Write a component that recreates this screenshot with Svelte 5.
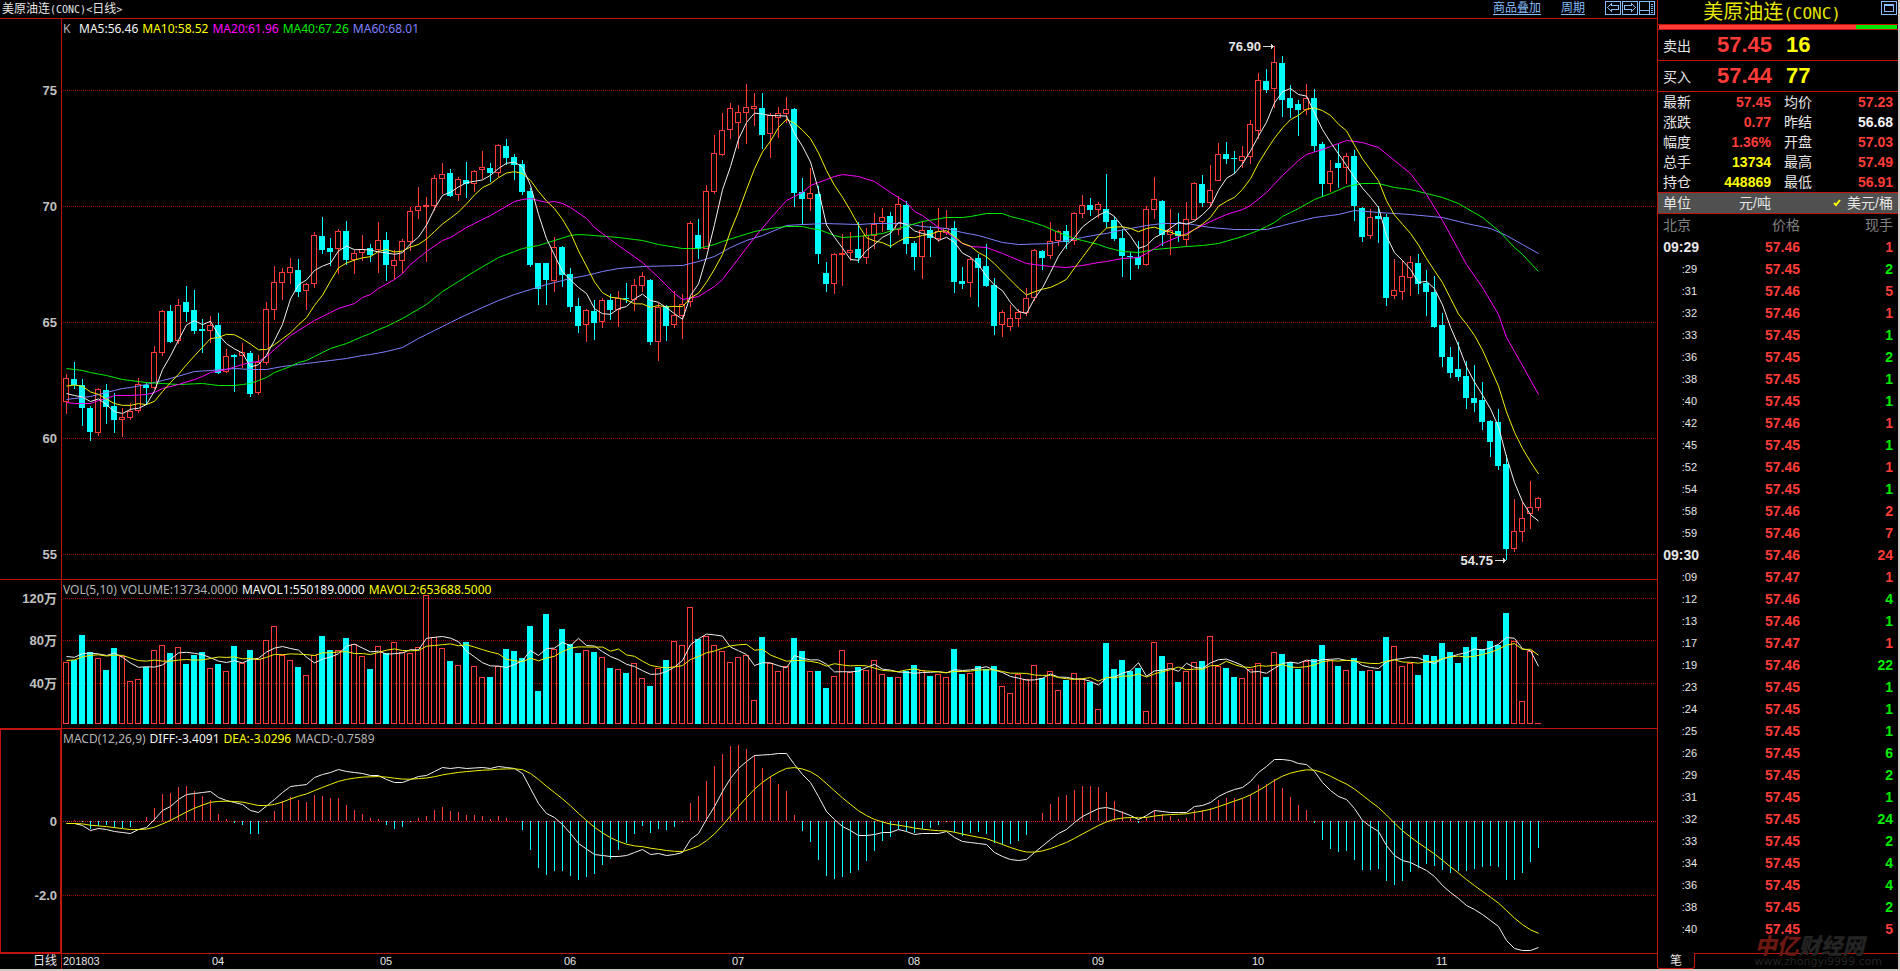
<script lang="ts">
    const STEP = 8
    const BODY = 6

    // direction, high, body top, body bottom, low
    const candleRows = `
u 374 378 402 414|d 362 379 385 389|d 379 385 408 426|d 406 408 432 441|u 388 389 433 436|d 384 390 407 424|d 393 406 420 433|u 408 417 420 437|u 403 411 418 420|u 378 384 411 413
d 383 385 388 405|u 346 352 388 389|u 310 311 353 356|d 305 311 342 343|u 299 305 341 344|d 286 302 312 322|d 290 310 331 334|d 319 329 331 353|u 316 325 331 343|d 313 325 373 374
u 349 356 372 373|d 354 355 357 392|u 343 352 356 368|d 351 353 394 397|u 355 362 393 395|u 302 309 363 365|u 266 282 310 320|u 268 272 283 300|u 258 267 273 284|d 259 270 292 297
u 283 284 291 310|u 232 235 284 288|d 217 236 250 254|d 238 248 252 266|u 229 231 249 274|d 221 231 260 265|u 250 253 260 274|u 235 249 253 261|d 244 248 255 262|u 222 240 250 273
d 232 240 265 281|u 250 260 266 279|u 239 241 261 273|u 207 211 242 251|u 187 206 211 219|u 197 205 207 262|u 175 178 206 211|u 163 174 179 194|d 169 173 196 197|u 177 179 195 201
d 162 180 184 198|u 170 171 184 192|u 151 167 170 179|d 163 168 173 182|u 144 145 173 177|d 139 146 158 165|d 154 157 165 180|d 160 164 192 195|d 188 191 265 267|d 263 263 289 305
d 263 263 280 305|u 237 247 281 292|d 246 247 275 287|d 268 274 307 312|d 298 306 326 333|u 309 310 325 342|d 300 311 323 340|u 298 300 322 328|d 294 300 310 320|u 291 298 310 327
d 283 298 299 303|u 279 285 300 311|u 272 276 286 292|d 279 280 342 345|u 303 307 342 361|d 305 306 326 341|u 291 315 325 328|u 294 304 316 339|u 221 223 302 307|d 219 235 249 259
u 185 191 249 249|u 135 153 192 194|u 113 130 155 156|u 103 108 130 139|u 105 112 123 149|u 84 107 113 144|u 93 106 109 126|d 93 108 135 149|u 113 115 134 158|u 107 113 118 138
u 97 109 114 123|d 108 109 193 207|d 178 192 199 225|u 168 193 199 211|d 186 194 254 264|d 262 273 284 292|u 253 254 284 294|u 234 253 255 286|u 232 250 253 261|d 222 249 258 263
u 228 235 258 264|u 213 224 236 249|u 208 217 222 232|d 212 216 230 248|u 196 204 230 235|d 201 205 244 254|d 241 243 257 270|u 221 230 257 279|d 226 230 238 257|u 208 231 239 242
u 210 228 233 235|d 221 228 282 293|d 267 281 284 289|u 257 259 283 297|d 254 258 268 307|d 244 266 286 287|d 278 285 326 335|u 310 312 325 337|u 305 318 327 331|u 309 312 319 327
u 288 298 313 316|u 249 250 298 301|d 250 251 258 270|u 222 241 256 259|u 230 231 241 246|d 225 231 242 249|u 212 213 241 245|u 195 205 214 218|d 198 205 210 216|u 202 204 210 218
d 174 209 222 228|d 217 220 239 241|d 229 238 256 277|d 252 256 257 280|d 241 257 265 269|u 206 209 265 266|u 177 199 210 219|d 200 201 235 246|u 209 230 235 255|d 213 231 236 242
u 202 219 240 246|u 182 183 220 220|d 175 184 203 207|u 165 190 203 207|u 143 154 181 181|d 142 154 159 164|d 151 158 159 174|u 146 156 161 168|u 120 124 157 164|u 73 80 131 139
d 69 81 90 93|u 46 62 89 108|d 56 63 100 117|d 85 98 108 118|d 100 104 110 136|u 84 98 110 115|d 89 98 146 152|d 142 144 184 197|u 160 171 184 192|d 144 163 168 188
u 153 156 168 184|d 150 156 206 221|d 207 208 237 242|u 209 217 236 239|d 206 216 219 243|d 214 217 298 306|u 259 290 296 299|u 260 276 292 300|u 256 262 278 296|d 254 263 284 294
d 270 283 292 316|d 276 292 327 328|d 313 325 357 367|d 347 357 373 378|d 342 369 377 381|d 361 376 398 409|d 365 398 403 412|d 382 400 422 430|d 420 421 442 457|d 409 422 466 470
d 455 464 549 560|u 499 531 549 552|u 502 518 532 542|u 481 507 514 529|u 497 498 508 511`

    const candles = candleRows.trim().split(/[|\n]/).map((row, i) => {
        const [dir, high, top, bottom, low] = row.split(' ')
        return { i, up: dir === 'u', high: +high, top: +top, bottom: +bottom, low: +low }
    })

    const volumes = [
        62,64,89,72,66,54,76,68,43,45,57,74,79,71,77,60,69,72,56,60,53,78,61,74,65,84,98,69,64,57,
        49,69,88,74,74,86,80,68,55,78,71,82,72,71,77,129,87,76,63,59,82,58,47,47,58,75,73,66,98,33,
        110,75,95,80,71,74,72,67,56,55,51,61,46,38,56,64,83,79,117,85,88,79,73,62,67,69,24,87,61,53,
        58,86,73,53,53,36,48,74,52,57,54,64,50,47,47,53,59,54,48,50,47,75,50,51,58,55,58,38,31,50,
        45,59,46,53,34,44,51,45,42,15,81,55,64,53,56,13,82,68,61,42,53,62,63,88,58,56,47,46,55,61,
        47,72,70,62,55,63,65,79,64,58,54,66,53,54,53,87,78,58,61,49,69,68,81,72,61,77,87,75,83,79,
        111,83,23,73,1
    ]

    const macd = [
        0,1,-1,-8,-5,-4,-7,-7,-6,0,4,13,27,28,34,35,30,25,21,7,2,-2,-4,-13,-13,-1,10,20,24,21,
        19,26,25,23,23,16,11,7,3,2,-4,-8,-6,-1,3,5,11,14,10,9,6,6,5,2,5,3,0,-9,-29,-47,
        -54,-50,-50,-55,-59,-56,-53,-44,-38,-29,-22,-13,-5,-12,-8,-9,-6,-1,18,25,40,55,67,75,76,72,66,53,45,37,
        30,6,-10,-21,-39,-55,-58,-56,-52,-49,-40,-30,-20,-16,-8,-10,-12,-8,-7,-4,-1,-11,-15,-12,-11,-13,-22,-23,-23,-20,
        -14,0,8,17,24,26,31,35,35,34,29,20,10,3,-2,4,10,7,5,2,3,11,11,13,21,23,23,22,26,36,
        37,42,33,24,16,11,-2,-19,-28,-31,-30,-39,-49,-49,-48,-60,-64,-60,-51,-47,-43,-45,-49,-52,-50,-50,-48,-46,-45,-46,
        -59,-59,-52,-41,-27
    ]

    // "index:value" pairs
    const ma20 = '0:402 1:403 3:403 4:400 5:398 6:395 8:395 10:394 11:392 12:388 14:384 16:379 17:376 18:372 20:369 22:364 23:362 24:361 25:356 28:335 31:320 34:308 36:303 37:297 38:294 39:288 41:279 42:273 43:264 45:251 47:240 48:237 50:227 53:215 56:201 57:199 58:198 60:202 61:201 62:203 63:207 65:218 66:227 69:245 72:262 74:277 76:293 77:299 79:296 81:286 82:279 86:237 88:218 90:200 91:196 92:192 93:185 94:182 96:176 97:174 99:176 101:181 103:192 105:202 106:211 107:215 109:227 110:232 112:243 113:246 115:247 117:253 120:263 123:266 125:267 127:265 129:262 130:261 132:258 134:257 135:253 137:243 140:233 143:221 145:214 147:209 148:205 150:192 152:175 154:160 155:154 157:149 160:140 162:142 164:147 166:160 168:173 170:194 172:220 175:264 177:287 179:314 180:337 182:365 184:394'
    const ma40 = '0:368 2:370 3:372 5:375 7:379 10:382 14:384 17:383 19:385 21:385 23:383 25:377 26:372 28:366 29:362 30:360 33:348 35:343 37:336 38:333 39:329 40:326 42:318 45:304 47:291 51:271 54:257 57:248 59:245 61:240 63:235 64:234 66:235 69:237 72:240 74:244 77:248 79:248 81:244 82:241 84:236 86:231 88:228 90:226 92:226 93:228 94:229 96:235 97:237 99:236 102:233 104:228 107:221 110:217 112:217 113:216 115:213 117:213 118:216 120:220 122:225 124:232 126:238 129:244 130:247 132:251 134:252 136:249 140:246 142:245 144:243 147:236 149:230 151:222 152:216 154:208 156:199 158:193 160:186 162:183 164:183 166:187 168:189 172:197 174:203 177:217 179:230 181:247 182:254 184:271'
    const ma60 = '0:399 2:397 3:396 5:392 7:388 8:387 10:384 13:378 16:371 18:370 21:368 23:369 25:369 27:366 30:363 32:361 35:358 37:355 38:354 40:351 42:347 44:338 46:330 49:318 52:307 54:300 56:294 58:289 60:284 63:278 65:275 67:271 69:268 72:266 77:265 79:261 81:256 83:247 85:240 87:235 90:225 92:224 95:223 99:224 101:223 103:223 105:223 107:226 110:228 112:232 114:235 117:242 119:244 123:243 125:240 127:237 129:234 130:233 131:231 133:228 135:225 137:223 140:223 143:227 146:229 150:229 153:223 156:217 159:214 161:210 164:212 168:214 172:217 175:223 178:228 180:235 182:244 184:253'
    const diffKeys = '0:-2 1:-2 2:-4 3:-9 4:-7 5:-8 6:-10 7:-11 8:-12 9:-8 10:-6 11:2 12:11 13:15 14:22 15:27 17:29 18:30 19:24 20:21 22:17 23:11 24:9 26:22 27:29 28:35 30:37 31:44 32:47 33:49 34:52 35:50 37:48 38:46 39:46 40:42 41:39 42:39 44:45 45:46 47:54 48:53 49:54 50:53 52:54 53:53 54:55 56:53 57:48 58:33 59:18 60:8 61:4 62:-3 63:-12 64:-22 66:-33 68:-35 69:-35 70:-34 72:-28 73:-33 74:-32 75:-34 76:-33 77:-31 78:-18 79:-12 80:2 81:15 82:30 83:43 84:53 85:60 86:66 88:67 89:68 90:68 91:57 92:47 93:39 94:25 95:10 96:2 97:-5 98:-9 99:-14 100:-14 101:-13 102:-11 103:-11 104:-8 105:-10 106:-13 107:-12 109:-12 110:-10 111:-16 112:-20 114:-22 115:-23 116:-31 117:-35 118:-38 119:-39 120:-38 121:-31 123:-18 124:-12 125:-8 126:-1 127:5 128:9 129:13 130:14 131:12 133:6 134:2 135:6 136:11 138:9 140:9 141:15 142:16 143:19 144:25 145:29 146:32 147:34 148:40 149:49 150:55 151:62 152:62 153:61 154:58 155:57 156:50 157:39 158:31 159:25 160:22 161:13 162:1 163:-5 164:-10 165:-24 166:-34 167:-39 168:-41 169:-45 170:-49 171:-55 172:-64 173:-71 174:-77 175:-84 176:-88 177:-93 178:-99 179:-105 180:-119 181:-127 182:-129 183:-129 184:-126'

    function expand(keys: string) {
        const pairs = keys.split(' ').map((k) => k.split(':').map(Number))
        const out: number[] = []
        for (let k = 0; k < pairs.length - 1; k++) {
            const [a, va] = pairs[k]
            const [b, vb] = pairs[k + 1]
            for (let i = a; i < b; i++) out.push(va + ((vb - va) * (i - a)) / (b - a))
        }
        out.push(pairs[pairs.length - 1][1])
        return out
    }

    // history holds the nine values before the first visible bar
    function average(values: number[], history: number[], n: number) {
        const all = [...history, ...values]
        return values.map((_, i) => {
            const end = i + history.length + 1
            return all.slice(end - n, end).reduce((a, b) => a + b, 0) / n
        })
    }

    function ema(values: number[], k: number) {
        let last = values[0]
        return values.map((v) => (last = last + k * (v - last)))
    }

    const line = (values: number[], toY: (v: number) => number) =>
        values.map((v, i) => `${i * STEP + 4.5},${(toY(v) + 0.5).toFixed(1)}`).join(' ')

    const priceY = (v: number) => v - 19
    const volY = (v: number) => 144 - v
    const macdY = (v: number) => 92 - v

    const closes = candles.map((c) => (c.up ? c.top : c.bottom))
    const closeHistory = [396, 395, 375, 365, 360, 375, 400, 410, 402]
    const volHistory = [58, 58, 58, 60, 66, 68, 70, 70, 70]
    const diff = expand(diffKeys)

    const priceLines = [
        { cls: 'c-blue', points: line(expand(ma60), priceY) },
        { cls: 'c-green', points: line(expand(ma40), priceY) },
        { cls: 'c-magenta', points: line(expand(ma20), priceY) },
        { cls: 'c-yellow', points: line(average(closes, closeHistory, 10), priceY) },
        { cls: 'c-white', points: line(average(closes, closeHistory, 5), priceY) }
    ]
    const volLines = [
        { cls: 'c-white', points: line(average(volumes, volHistory, 5), volY) },
        { cls: 'c-yellow', points: line(average(volumes, volHistory, 10), volY) }
    ]
    const macdLines = [
        { cls: 'c-white', points: line(diff, macdY) },
        { cls: 'c-yellow', points: line(ema(diff, 0.2), macdY) }
    ]

    const priceGrid = [['75', 71], ['70', 187], ['65', 303], ['60', 419], ['55', 535]] as [string, number][]
    const volGrid = [['120万', 18], ['80万', 60], ['40万', 103]] as [string, number][]
    const macdGrid = [['0', 92], ['-2.0', 166]] as [string, number][]
    const months = [['04', 18], ['05', 39], ['06', 62], ['07', 83], ['08', 105], ['09', 128], ['10', 148], ['11', 171]] as [string, number][]

    const quotes = [
        ['最新', '57.45', 'red', '均价', '57.23', 'red'],
        ['涨跌', '0.77', 'red', '昨结', '56.68', 'white'],
        ['幅度', '1.36%', 'red', '开盘', '57.03', 'red'],
        ['总手', '13734', 'yellow', '最高', '57.49', 'red'],
        ['持仓', '448869', 'yellow', '最低', '56.91', 'red']
    ]

    const trades = `09:29 57.46 1 r|:29 57.45 2 g|:31 57.46 5 r|:32 57.46 1 r|:33 57.45 1 g|:36 57.45 2 g|:38 57.45 1 g|:40 57.45 1 g|:42 57.46 1 r|:45 57.45 1 g|:52 57.46 1 r|:54 57.45 1 g|:58 57.46 2 r|:59 57.46 7 r|09:30 57.46 24 r|:09 57.47 1 r|:12 57.46 4 g|:13 57.46 1 g|:17 57.47 1 r|:19 57.46 22 g|:23 57.45 1 g|:24 57.45 1 g|:25 57.45 1 g|:26 57.45 6 g|:29 57.45 2 g|:31 57.45 1 g|:32 57.45 24 g|:33 57.45 2 g|:34 57.45 4 g|:36 57.45 4 g|:38 57.45 2 g|:40 57.45 5 r`
        .split('|')
        .map((t) => t.split(' '))
</script>

{#snippet axis(labels: [string, number][])}
    <svg class="axis">
        {#each labels as [text, y]}
            <text x="57" y={y + 5} text-anchor="end">{text}</text>
        {/each}
    </svg>
{/snippet}

{#snippet grid(labels: [string, number][])}
    {#each labels as [text, y]}
        <line class="grid" class:zero={text === '0'} x1="1" x2="100%" y1={y + 0.5} y2={y + 0.5} />
    {/each}
{/snippet}

{#snippet lines(items: { cls: string; points: string }[])}
    {#each items as l}
        <polyline class={l.cls} points={l.points} />
    {/each}
{/snippet}

<div class="app">
    <main>
        <header>
            <h1>美原油连<span class="latin">(CONC)&lt;</span>日线<span class="latin">&gt;</span></h1>
            <nav>
                <a href="#overlay">商品叠加</a>
                <a href="#period">周期</a>
                <div class="tools">
                    <button aria-label="上一个">
                        <svg width="16" height="14"><rect x=".5" y=".5" width="15" height="13" /><path d="M2.5 6.5 6.5 2.5V4.5H13.5V8.5H6.5V10.5Z" /></svg>
                    </button>
                    <button aria-label="下一个">
                        <svg width="16" height="14"><rect x=".5" y=".5" width="15" height="13" /><path d="M13.5 6.5 9.5 2.5V4.5H2.5V8.5H9.5V10.5Z" /></svg>
                    </button>
                    <button aria-label="布局">
                        <svg width="16" height="14"><rect x=".5" y=".5" width="15" height="13" /><path d="M.5 9.5H10.5M10.5 .5V13.5M12 3.5H14M12 5.5H14M12 7.5H14M12 9.5H14M12 11.5H14" /></svg>
                    </button>
                </div>
            </nav>
        </header>

        <section class="pane price">
            {@render axis(priceGrid)}
            <div class="plot">
                <svg>
                    {@render grid(priceGrid)}
                    <g class="bars">
                        {#each candles as c}
                            {@const x = c.i * STEP + 1}
                            {#if c.up}
                                <rect class="up" x={x + 3} y={priceY(c.high)} width="1" height={c.top - c.high} />
                                <rect class="up" x={x + 3} y={priceY(c.bottom)} width="1" height={c.low - c.bottom} />
                                <rect class="hollow" x={x + 0.5} y={priceY(c.top) + 0.5} width={BODY - 1} height={Math.max(1, c.bottom - c.top - 1)} />
                            {:else}
                                <rect class="down" x={x + 3} y={priceY(c.high)} width="1" height={c.low - c.high} />
                                <rect class="down" {x} y={priceY(c.top)} width={BODY} height={c.bottom - c.top} />
                            {/if}
                        {/each}
                    </g>
                    {@render lines(priceLines)}
                    <text x="1199" y="32" text-anchor="end">76.90</text>
                    <path class="arrow" d="M1201 27.5H1212M1209 25V30M1210 26V29" />
                    <text x="1431" y="546" text-anchor="end">54.75</text>
                    <path class="arrow" d="M1433 541.5H1444M1441 539V544M1442 540V543" />
                </svg>
                <p class="legend">
                    <span class="k">K</span>
                    <span class="t-white">MA5:56.46</span>
                    <span class="t-yellow">MA10:58.52</span>
                    <span class="t-magenta">MA20:61.96</span>
                    <span class="t-green">MA40:67.26</span>
                    <span class="t-blue">MA60:68.01</span>
                </p>
            </div>
        </section>

        <section class="pane volume">
            {@render axis(volGrid)}
            <div class="plot">
                <svg>
                    {@render grid(volGrid)}
                    <g class="bars">
                        {#each candles as c}
                            {@const h = volumes[c.i]}
                            {#if c.up && h > 1}
                                <rect class="hollow" x={c.i * STEP + 1.5} y={volY(h) + 0.5} width={BODY - 1} height={h - 1} />
                            {:else}
                                <rect class={c.up ? 'up' : 'down'} x={c.i * STEP + 1} y={volY(h)} width={BODY} height={h} />
                            {/if}
                        {/each}
                    </g>
                    {@render lines(volLines)}
                </svg>
                <p class="legend">
                    <span>VOL(5,10)</span>
                    <span>VOLUME:13734.0000</span>
                    <span class="t-white">MAVOL1:550189.0000</span>
                    <span class="t-yellow">MAVOL2:653688.5000</span>
                </p>
            </div>
        </section>

        <section class="pane macd">
            {@render axis(macdGrid)}
            <div class="plot">
                <svg>
                    {@render grid(macdGrid)}
                    <g class="bars">
                        {#each macd as v, i}
                            <rect class={v > 0 ? 'up' : 'down'} x={i * STEP + 4} y={v > 0 ? 92 - v : 92} width="1" height={Math.abs(v)} />
                        {/each}
                    </g>
                    {@render lines(macdLines)}
                </svg>
                <p class="legend">
                    <span>MACD(12,26,9)</span>
                    <span class="t-white">DIFF:-3.4091</span>
                    <span class="t-yellow">DEA:-3.0296</span>
                    <span>MACD:-0.7589</span>
                </p>
            </div>
        </section>

        <footer>
            <span class="period">日线</span>
            <svg>
                <text x="1" y="11">201803</text>
                {#each months as [m, i]}
                    <text x={i * STEP + 6} y="11">{m}</text>
                {/each}
            </svg>
        </footer>
    </main>

    <aside>
        <div class="name">
            <h2>美原油连<span class="latin">(CONC)</span></h2>
            <button aria-label="窗口">
                <svg width="16" height="14"><rect x=".5" y=".5" width="15" height="13" /><rect x="3.5" y="3.5" width="9" height="7" /><path d="M3 4.5H13" /></svg>
            </button>
        </div>
        <div class="ratio"><i class="buy"></i><i class="sell"></i></div>
        <div class="deal"><span>卖出</span><b class="t-red">57.45</b><b class="t-yellow">16</b></div>
        <div class="deal"><span>买入</span><b class="t-red">57.44</b><b class="t-yellow">77</b></div>

        <table class="quotes">
            <tbody>
                {#each quotes as [a, av, ac, b, bv, bc]}
                    <tr>
                        <th scope="row">{a}</th>
                        <td class="t-{ac}">{av}</td>
                        <th scope="row" class="second">{b}</th>
                        <td class="t-{bc}">{bv}</td>
                    </tr>
                {/each}
            </tbody>
        </table>

        <div class="unit">
            <span>单位</span>
            <button>元/吨</button>
            <button>
                <svg width="8" height="8"><path d="M1 4 3 6 7 1" /></svg>
                美元/桶
            </button>
        </div>

        <table class="trades">
            <thead>
                <tr><th class="first">北京</th><th>价格</th><th>现手</th></tr>
            </thead>
            <tbody>
                {#each trades as [time, price, qty, side]}
                    <tr>
                        <td class="time" class:minute={time.length > 3}>{time}</td>
                        <td class="t-red">{price}</td>
                        <td class={side === 'g' ? 't-green' : 't-red'}>{qty}</td>
                    </tr>
                {/each}
            </tbody>
        </table>

        <div class="tabs">
            <button class="tab">笔</button>
            <div class="rest"></div>
        </div>

        <div class="mark">
            <strong><em>中亿</em>财经网</strong>
            <small>www.zhongyi9999.com</small>
        </div>
    </aside>
</div>

<style>
    :global(body) {
        margin: 0;
        background: #000;
    }

    .app {
        --line: #c0140c;
        --link: #84bcf8;
        display: flex;
        min-height: 100vh;
        box-sizing: border-box;
        border-right: 2px solid #d4c8c4;
        border-bottom: 2px solid #d4c8c4;
        background: #000;
        color: #e6e6e6;
        font: 14px "Liberation Sans", "Noto Sans CJK SC", sans-serif;
    }

    h1, h2, p {
        margin: 0;
        font-weight: normal;
    }

    button {
        padding: 0;
        border: none;
        background: none;
        color: inherit;
        font: inherit;
        cursor: pointer;
    }

    svg {
        display: block;
    }

    main {
        flex: 1;
        min-width: 0;
        display: flex;
        flex-direction: column;
    }

    header {
        display: flex;
        justify-content: space-between;
        height: 18px;
        line-height: 18px;
        font-size: 12px;
        border-bottom: 1px solid var(--line);
    }

    h1 {
        padding-left: 2px;
        font-size: 12px;
    }

    .latin {
        font-family: "DejaVu Sans Mono", monospace;
        font-size: 10px;
    }

    nav {
        display: flex;
        gap: 20px;
        padding-right: 2px;
        line-height: 16px;
    }

    nav a {
        color: var(--link);
        text-underline-offset: 2px;
    }

    .tools {
        display: flex;
        align-items: flex-start;
        gap: 1px;
        padding-top: 1px;
    }

    button svg {
        fill: none;
        stroke: var(--link);
        shape-rendering: crispEdges;
    }

    .pane {
        display: grid;
        grid-template-columns: 61px 1fr;
        border-bottom: 1px solid var(--line);
    }

    .price { height: 560px; }
    .volume { height: 148px; }
    .macd { height: 224px; }

    .axis, .plot > svg {
        width: 100%;
        height: 100%;
    }

    .macd .axis {
        box-shadow: inset 0 0 0 1px var(--line);
    }

    .axis text {
        fill: #c0c0c0;
        font-size: 13px;
        font-weight: bold;
    }

    .plot {
        display: grid;
        min-width: 0;
        border-left: 1px solid var(--line);
    }

    .plot > * {
        grid-area: 1 / 1;
        min-width: 0;
    }

    .plot text {
        fill: #e6e6e6;
        font-size: 13px;
        font-weight: bold;
    }

    .legend {
        display: flex;
        align-self: start;
        gap: 4px;
        padding-left: 1px;
        line-height: 19px;
        font-family: "Noto Sans", sans-serif;
        font-size: 12px;
        color: #b4b4b4;
    }

    .k { width: 12px; }

    .grid {
        stroke: #960000;
        stroke-dasharray: 1 1;
        shape-rendering: crispEdges;
    }

    .grid.zero { stroke: #e01c1c; }

    .bars { shape-rendering: crispEdges; }
    .up { fill: #ff3c38; }
    .down { fill: #00ffff; }
    .hollow {
        fill: none;
        stroke: #ff3c38;
    }

    polyline { fill: none; }
    .c-white { stroke: #f0f0f0; }
    .c-yellow { stroke: #f0f000; }
    .c-magenta { stroke: #ff00ff; }
    .c-green { stroke: #00f000; }
    .c-blue { stroke: #8080ff; }

    .t-white { color: #f4f4f4; }
    .t-yellow { color: #ffff00; }
    .t-magenta { color: #ff00ff; }
    .t-green { color: #00ec00; }
    .t-blue { color: #8080ff; }
    .t-red { color: #ff3c38; }

    .arrow {
        stroke: #d8d8d8;
        shape-rendering: crispEdges;
    }

    footer {
        flex: 1;
        display: grid;
        grid-template-columns: 61px 1fr;
        min-height: 15px;
    }

    footer svg {
        width: 100%;
        height: 15px;
        box-sizing: border-box;
        border-left: 1px solid var(--line);
    }

    footer text {
        fill: #e6e6e6;
        font-size: 11px;
    }

    .period {
        padding-right: 4px;
        text-align: right;
        font-size: 12px;
        line-height: 15px;
    }

    aside {
        position: relative;
        width: 240px;
        display: flex;
        flex-direction: column;
        padding-left: 1px;
        background: linear-gradient(var(--line), var(--line)) 0 0 / 1px calc(100% - 3px) no-repeat;
    }

    .name {
        display: flex;
        justify-content: flex-end;
        gap: 40px;
        height: 24px;
        padding-right: 1px;
        border-bottom: 1px solid var(--line);
    }

    .name button {
        align-self: flex-start;
        padding-top: 1px;
    }

    h2 {
        color: #e6e600;
        font-size: 20px;
        line-height: 24px;
    }

    h2 .latin { font-size: 16px; }

    .ratio {
        display: flex;
        height: 4px;
        padding: 0 1px;
        border-bottom: 1px solid var(--line);
    }

    .ratio .buy {
        flex: 197;
        background: #ff3c38;
    }

    .ratio .sell {
        flex: 41;
        background: #00e600;
    }

    .deal {
        display: grid;
        grid-template-columns: 54px 69px 1fr;
        align-items: center;
        height: 30px;
        padding-left: 5px;
        border-bottom: 1px solid var(--line);
    }

    .deal b { font-size: 22px; }

    table {
        width: 100%;
        border-collapse: collapse;
        table-layout: fixed;
    }

    th, td {
        padding: 0 5px 0 0;
        text-align: right;
        white-space: nowrap;
        line-height: 20px;
    }

    th { font-weight: normal; }
    td { font-weight: bold; }

    .quotes th {
        width: 33px;
        padding: 0 0 0 5px;
        text-align: left;
    }

    .quotes td:nth-child(2) {
        width: 75px;
        padding-right: 0;
    }

    .quotes th.second {
        width: 28px;
        padding-left: 13px;
    }

    .unit {
        display: grid;
        grid-template-columns: 40px 68px 1fr;
        height: 20px;
        padding: 0 5px;
        line-height: 20px;
        background: #505050;
        border-top: 1px solid var(--line);
        border-bottom: 1px solid var(--line);
    }

    .unit button {
        display: flex;
        align-items: center;
        justify-content: flex-end;
        gap: 6px;
    }

    .unit button svg {
        stroke: #ffff00;
        stroke-width: 2;
        shape-rendering: auto;
    }

    .trades th, .trades td { line-height: 22px; }
    .trades th { color: #808080; }
    .trades th.first {
        width: 36px;
        padding-left: 5px;
        padding-right: 0;
        text-align: left;
    }

    .trades th:nth-child(2) { width: 101px; }

    .trades .time {
        padding-right: 2px;
        font-size: 11px;
        font-weight: normal;
    }

    .trades .time.minute {
        padding-right: 0;
        font-size: 14px;
        font-weight: bold;
    }

    .tabs {
        display: flex;
        flex: 1;
        align-items: flex-end;
        margin-left: -1px;
    }

    .tab {
        width: 38px;
        height: 16px;
        box-sizing: border-box;
        border: 1px solid var(--line);
        border-top: none;
        border-radius: 0 0 3px 3px;
        font-size: 12px;
        line-height: 14px;
    }

    .rest {
        flex: 1;
        height: 15px;
        border-top: 1px solid var(--line);
    }

    .mark {
        position: absolute;
        right: 16px;
        bottom: 2px;
        display: flex;
        flex-direction: column;
        color: #242424;
        pointer-events: none;
    }

    .mark strong {
        font-size: 22px;
        font-style: italic;
        font-weight: 900;
        line-height: 18px;
    }

    .mark em { color: #6a1810; }

    .mark small {
        font: 11px/11px "DejaVu Sans", sans-serif;
    }
</style>
